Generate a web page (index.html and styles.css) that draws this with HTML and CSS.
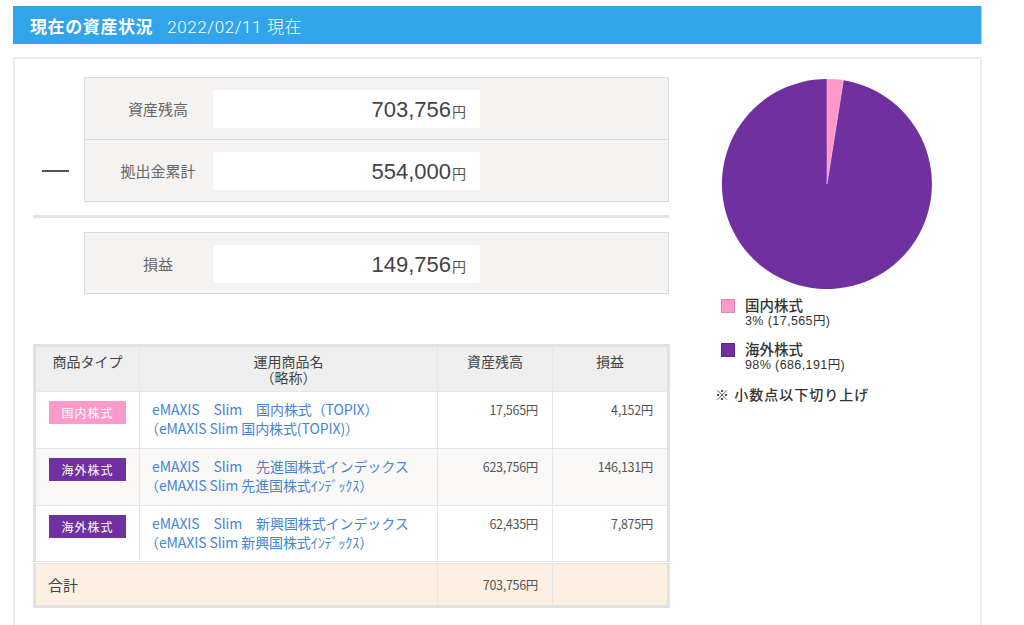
FILE: index.html
```html
<!DOCTYPE html>
<html lang="ja">
<head>
<meta charset="utf-8">
<title>現在の資産状況</title>
<link rel="stylesheet" href="styles.css">
</head>
<body>
<div class="page">
  <div class="title-bar">
    <span class="title">現在の資産状況</span>
    <span class="date">2022/02/11 現在</span>
  </div>
  <div class="panel">
    <div class="left">
      <div class="calc">
        <div class="minus-col"><span class="minus"></span></div>
        <div class="box">
          <div class="row">
            <div class="label">資産残高</div>
            <div class="value">703,756<span class="yen">円</span></div>
          </div>
          <div class="row">
            <div class="label">拠出金累計</div>
            <div class="value">554,000<span class="yen">円</span></div>
          </div>
        </div>
      </div>
      <div class="sep"></div>
      <div class="calc">
        <div class="minus-col"></div>
        <div class="box">
          <div class="row row-single">
            <div class="label">損益</div>
            <div class="value">149,756<span class="yen">円</span></div>
          </div>
        </div>
      </div>
      <table class="holdings">
        <colgroup>
          <col class="c1"><col class="c2"><col class="c3"><col class="c4">
        </colgroup>
        <thead>
          <tr>
            <th>商品タイプ</th>
            <th>運用商品名<br>（略称）</th>
            <th>資産残高</th>
            <th>損益</th>
          </tr>
        </thead>
        <tbody>
          <tr>
            <td class="type"><span class="badge badge-dom">国内株式</span></td>
            <td class="name"><a href="#">eMAXIS　Slim　国内株式（TOPIX）<br><span class="hp">（</span>eMAXIS Slim 国内株式(TOPIX)）</a></td>
            <td class="num">17,565円</td>
            <td class="num">4,152円</td>
          </tr>
          <tr class="alt">
            <td class="type"><span class="badge badge-for">海外株式</span></td>
            <td class="name"><a href="#">eMAXIS　Slim　先進国株式インデックス<br><span class="hp">（</span>eMAXIS Slim 先進国株式ｲﾝﾃﾞｯｸｽ）</a></td>
            <td class="num">623,756円</td>
            <td class="num">146,131円</td>
          </tr>
          <tr>
            <td class="type"><span class="badge badge-for">海外株式</span></td>
            <td class="name"><a href="#">eMAXIS　Slim　新興国株式インデックス<br><span class="hp">（</span>eMAXIS Slim 新興国株式ｲﾝﾃﾞｯｸｽ）</a></td>
            <td class="num">62,435円</td>
            <td class="num">7,875円</td>
          </tr>
          <tr class="total">
            <td colspan="2" class="total-label">合計</td>
            <td class="num">703,756円</td>
            <td></td>
          </tr>
        </tbody>
      </table>
    </div>
    <div class="right">
      <svg class="pie" width="210" height="210" viewBox="0 0 210 210">
        <path d="M105,105 L121.4,1.3 A105,105 0 1,1 105,0 Z" fill="#7030a0"/>
        <path d="M105,105 L105,0 A105,105 0 0,1 121.4,1.3 Z" fill="#ff99cc" stroke="#f2b3d6" stroke-width="0.6"/>
      </svg>
      <ul class="legend">
        <li>
          <span class="swatch swatch-dom"></span>
          <div class="legend-text">
            <div class="legend-name">国内株式</div>
            <div class="legend-val">3% (17,565円)</div>
          </div>
        </li>
        <li>
          <span class="swatch swatch-for"></span>
          <div class="legend-text">
            <div class="legend-name">海外株式</div>
            <div class="legend-val">98% (686,191円)</div>
          </div>
        </li>
      </ul>
      <p class="note">※ 小数点以下切り上げ</p>
    </div>
  </div>
</div>
</body>
</html>
```

FILE: styles.css
```css
* { box-sizing: border-box; }

body {
  margin: 0;
  background: #fff;
  font-family: "Noto Sans CJK JP", "Noto Sans", sans-serif;
  color: #444;
}

.page {
  margin: 6px 0 0 13px;
  width: 969px;
}

.title-bar {
  height: 38px;
  background: #31a4ec;
  border-right: 1px solid #9fd3f6;
  display: flex;
  align-items: center;
  padding-left: 17px;
  color: #fff;
}

.title {
  font-size: 17px;
  font-weight: bold;
  letter-spacing: 0.6px;
}

.date {
  font-family: "Roboto", "Noto Sans CJK JP", sans-serif;
  font-size: 17px;
  margin-left: 14px;
  font-weight: 300;
  letter-spacing: 0.6px;
}

.panel {
  margin-top: 13px;
  border: 2px solid #ececec;
  border-bottom: none;
  display: flex;
  padding: 18px 0 40px 18px;
}

.left {
  width: 636px;
}

.calc {
  display: flex;
}

.minus-col {
  width: 51px;
  display: flex;
  align-items: flex-end;
  padding-bottom: 30px;
}

.minus {
  display: block;
  width: 27px;
  height: 2px;
  margin-left: 9px;
  background: #555;
}

.box {
  width: 585px;
  border: 1px solid #dcdcdc;
  background: #f4f3f2;
}

.row {
  height: 62px;
  display: flex;
  align-items: flex-start;
  border-bottom: 1px solid #dcdcdc;
}

.row:last-child {
  border-bottom: none;
  height: 61px;
}

.row-single,
.row-single:last-child {
  height: 60px;
}

.label {
  width: 128px;
  padding-left: 18px;
  text-align: center;
  font-size: 15px;
  color: #666;
  line-height: 38px;
  margin-top: 12px;
}

.value {
  width: 267px;
  height: 38px;
  margin-top: 12px;
  background: #fff;
  text-align: right;
  padding-right: 14px;
  font-family: "Liberation Sans", Arial, sans-serif;
  font-size: 22px;
  line-height: 40px;
  color: #444;
}

.yen {
  font-family: "Noto Sans CJK JP", sans-serif;
  font-size: 14px;
  margin-left: 1px;
  color: #555;
}

.sep {
  height: 3px;
  background: #e2e2e2;
  margin: 13px 0 14px;
}

.holdings {
  margin-top: 50px;
  width: 634px;
  border-collapse: collapse;
  border: 3px solid #e2e2e2;
  table-layout: fixed;
}

.c1 { width: 105px; }
.c2 { width: 298px; }
.c3 { width: 115px; }
.c4 { width: 116px; }

.holdings th,
.holdings td {
  border: 1px solid #e6e6e6;
  vertical-align: top;
}

.holdings th {
  background: #efefef;
  font-family: "Liberation Sans", "Noto Sans CJK JP", sans-serif;
  font-weight: normal;
  font-size: 14px;
  line-height: 16px;
  color: #444;
  height: 46px;
  padding: 7px 4px 0;
}

.holdings td {
  height: 57px;
  padding: 7px 14px 0;
}

.holdings tr.alt td {
  background: #f9f8f6;
}

.type {
  text-align: center;
  padding-left: 4px !important;
  padding-right: 4px !important;
}

.badge {
  display: inline-block;
  width: 77px;
  height: 23px;
  line-height: 23px;
  color: #fff;
  font-size: 12px;
  letter-spacing: 1px;
}

.badge-dom { background: #fd9acb; }
.badge-for { background: #7030a0; }

.name a {
  color: #4585d8;
  text-decoration: none;
  font-size: 14px;
  line-height: 19px;
  display: block;
  padding-top: 1px;
  letter-spacing: -0.1px;
  margin-left: -2px;
}

.hp {
  font-feature-settings: "halt";
}

.num {
  text-align: right;
  font-size: 12.5px;
  color: #555;
  line-height: 19px;
  padding-top: 8px !important;
  letter-spacing: -0.3px;
}

.holdings tr.total td {
  background: #fdefe1;
  border-top: 3px double #e2e2e2;
  height: 44px;
  vertical-align: middle;
  padding-top: 0 !important;
}

.total-label {
  font-size: 15px;
  color: #444;
  padding-left: 12px !important;
}

.right {
  margin-left: 53px;
  padding-top: 2px;
}

.pie {
  display: block;
}

.legend {
  list-style: none;
  margin: 9px 0 0 -1px;
  padding: 0;
}

.legend li {
  display: flex;
  align-items: flex-start;
  margin-bottom: 14px;
}

.swatch {
  width: 14px;
  height: 14px;
  margin-top: 1px;
  flex: none;
}

.swatch-dom {
  background: #ff99cc;
  border: 1px solid #d884ad;
}

.swatch-for {
  background: #7030a0;
  border: 1px solid #5f2888;
}

.legend-text {
  margin-left: 10px;
  color: #333;
  font-family: "Liberation Sans", "Noto Sans CJK JP", sans-serif;
}

.legend-name {
  font-size: 14.5px;
  line-height: 16px;
  font-weight: 500;
}

.legend-val {
  font-size: 12.5px;
  line-height: 14px;
  letter-spacing: 0.4px;
}

.note {
  margin: -2px 0 0 -7px;
  font-size: 14px;
  letter-spacing: 1px;
  color: #333;
  font-weight: 500;
}
```
